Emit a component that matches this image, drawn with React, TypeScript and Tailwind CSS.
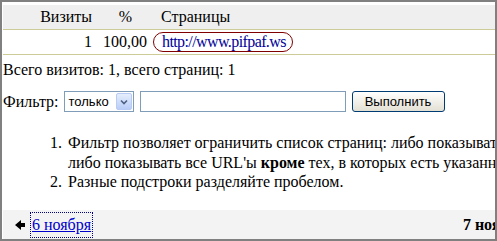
export default function App() {
  return (
    <div className="h-[241px] w-[497px] overflow-hidden border-2 border-[#808080] bg-white text-[16px] text-black [font-family:'Liberation_Serif',serif]">
      <div className="w-[544px] pl-px pt-[3px]">
        {/* table */}
        <div className="flex h-[24px] items-center bg-[#efefef]">
          <div className="w-[93px] pr-1 text-right">Визиты</div>
          <div className="w-[55px] pl-[4px] text-center">%</div>
          <div className="pl-[10px]">Страницы</div>
        </div>
        <div className="h-px bg-[#cccc99]" />
        <div className="flex h-[24px] items-center">
          <div className="w-[93px] pr-1 text-right">1</div>
          <div className="w-[55px] pr-1 text-right">100,00</div>
          <div className="pl-[2px]">
            <a
              href="#"
              className="block rounded-[10px] border border-[#800000] pl-[8px] pr-[6px] leading-[18px] tracking-[-0.6px] text-[#000099] no-underline"
            >
              http://www.pifpaf.ws
            </a>
          </div>
        </div>
        <div className="h-px bg-[#cccc99]" />

        <p className="mt-[6px] leading-[18px]">Всего визитов: 1, всего страниц: 1</p>

        {/* filter */}
        <div className="mt-[12px] flex items-center">
          <span className="mr-[5px] leading-[18px]">Фильтр:</span>
          <div className="flex h-[21px] w-[70px] items-center justify-between border border-[#7f9db9] bg-white pl-[4px] pr-px text-[13px] [font-family:'Liberation_Sans',sans-serif]">
            <span>только</span>
            <span className="flex h-[17px] w-[16px] items-center justify-center rounded-[2px] border border-[#b8cbf5] bg-gradient-to-b from-[#e6eefc] to-[#b9cdf7]">
              <svg width="8" height="6" viewBox="0 0 8 6">
                <path d="M1 1.5 L4 4.5 L7 1.5" fill="none" stroke="#4d6185" strokeWidth="1.6" />
              </svg>
            </span>
          </div>
          <input
            type="text"
            className="ml-[6px] h-[21px] w-[206px] border border-[#7f9db9] bg-white outline-none"
          />
          <button className="ml-[6px] h-[21px] w-[93px] rounded-[3px] border border-[#003c74] bg-gradient-to-b from-white to-[#e3e0d3] text-[13px] leading-[19px] text-black [font-family:'Liberation_Sans',sans-serif]">
            Выполнить
          </button>
        </div>

        {/* notes */}
        <ol className="mt-[21px] leading-[19.5px]">
          <li className="flex whitespace-nowrap">
            <span className="w-[59px] shrink-0 text-right">1.</span>
            <span className="pl-[6px]">
              Фильтр позволяет ограничить список страниц: либо показывать только те URL'ы, в которых есть указанные подстроки,
              <br />
              либо показывать все URL'ы <b>кроме</b> тех, в которых есть указанные подстроки.
            </span>
          </li>
          <li className="flex whitespace-nowrap">
            <span className="w-[59px] shrink-0 text-right">2.</span>
            <span className="pl-[6px]">Разные подстроки разделяйте пробелом.</span>
          </li>
        </ol>

        {/* footer nav */}
        <div className="mt-[18px] flex h-[31px] items-center bg-[#f3f3f3] pl-[12px] pr-[20px]">
          <svg width="10" height="10" viewBox="0 0 10 10" className="mr-[6px]">
            <polygon points="0,5 6,0 6,3 10,3 10,7 6,7 6,10" fill="#000" />
          </svg>
          <a href="#" className="px-px text-[#0000cc] underline outline-1 outline-dotted outline-[#000080]">
            6 ноября
          </a>
          <span className="ml-auto whitespace-nowrap font-bold">7 ноября</span>
        </div>
      </div>
    </div>
  );
}
